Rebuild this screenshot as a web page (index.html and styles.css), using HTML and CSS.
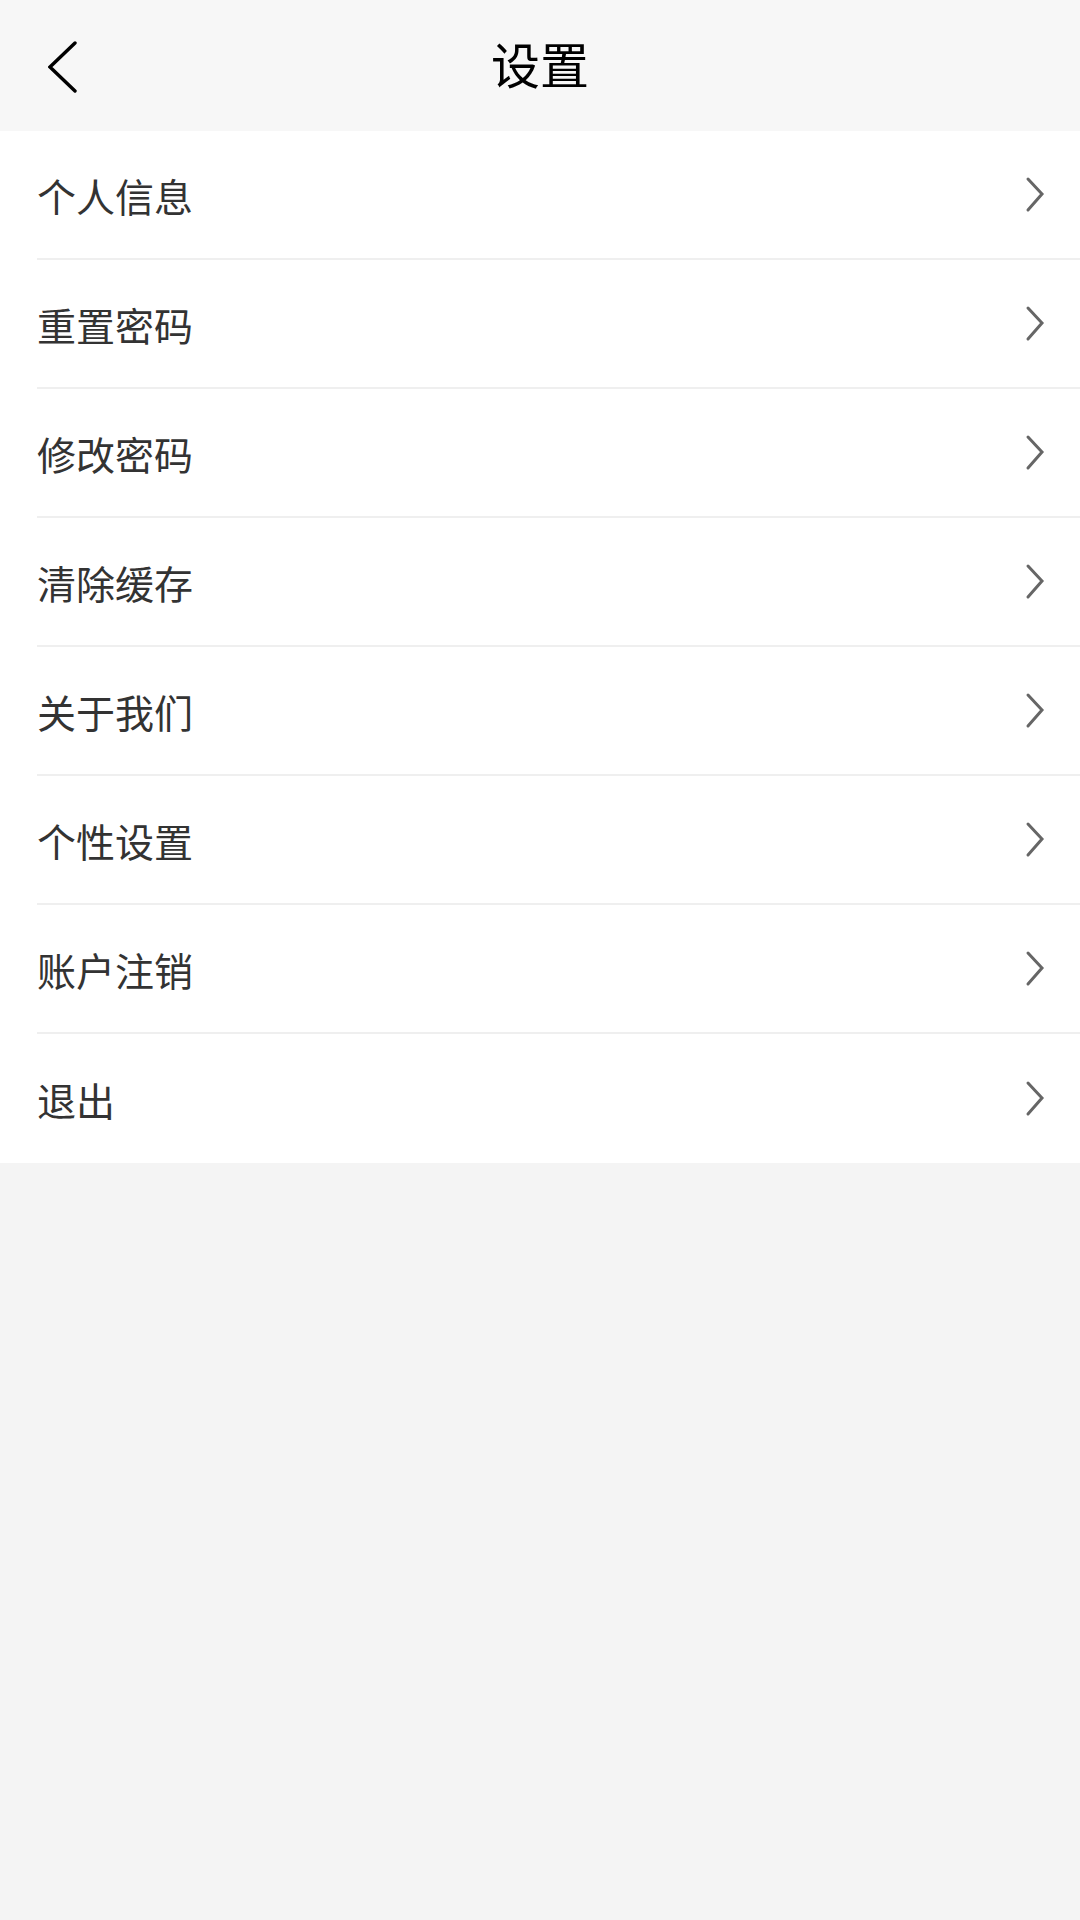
FILE: index.html
```html
<!DOCTYPE html>
<html lang="zh-CN">
<head>
<meta charset="utf-8">
<title>设置</title>
<link rel="stylesheet" href="styles.css">
</head>
<body>
<div class="page">
  <header class="topbar">
    <span class="back">
      <svg width="40" height="60" viewBox="0 0 40 60"><polyline points="27,6 2,30 27,54" fill="none" stroke="#000" stroke-width="3.4" stroke-linecap="round" stroke-linejoin="miter"/></svg>
    </span>
    <h1 class="title">设置</h1>
  </header>
  <ul class="menu">
    <li class="item"><span class="label">个人信息</span><svg class="chev" width="24" height="40" viewBox="0 0 24 40"><polyline points="7,5 21,20 7,36" fill="none" stroke="#666" stroke-width="3" stroke-linecap="round"/></svg></li>
    <li class="item"><span class="label">重置密码</span><svg class="chev" width="24" height="40" viewBox="0 0 24 40"><polyline points="7,5 21,20 7,36" fill="none" stroke="#666" stroke-width="3" stroke-linecap="round"/></svg></li>
    <li class="item"><span class="label">修改密码</span><svg class="chev" width="24" height="40" viewBox="0 0 24 40"><polyline points="7,5 21,20 7,36" fill="none" stroke="#666" stroke-width="3" stroke-linecap="round"/></svg></li>
    <li class="item"><span class="label">清除缓存</span><svg class="chev" width="24" height="40" viewBox="0 0 24 40"><polyline points="7,5 21,20 7,36" fill="none" stroke="#666" stroke-width="3" stroke-linecap="round"/></svg></li>
    <li class="item"><span class="label">关于我们</span><svg class="chev" width="24" height="40" viewBox="0 0 24 40"><polyline points="7,5 21,20 7,36" fill="none" stroke="#666" stroke-width="3" stroke-linecap="round"/></svg></li>
    <li class="item"><span class="label">个性设置</span><svg class="chev" width="24" height="40" viewBox="0 0 24 40"><polyline points="7,5 21,20 7,36" fill="none" stroke="#666" stroke-width="3" stroke-linecap="round"/></svg></li>
    <li class="item"><span class="label">账户注销</span><svg class="chev" width="24" height="40" viewBox="0 0 24 40"><polyline points="7,5 21,20 7,36" fill="none" stroke="#666" stroke-width="3" stroke-linecap="round"/></svg></li>
    <li class="item last"><span class="label">退出</span><svg class="chev" width="24" height="40" viewBox="0 0 24 40"><polyline points="7,5 21,20 7,36" fill="none" stroke="#666" stroke-width="3" stroke-linecap="round"/></svg></li>
  </ul>
</div>
</body>
</html>
```
FILE: styles.css
```css
html, body {
  margin: 0;
  padding: 0;
  background: #f4f4f4;
}
body {
  font-family: "Noto Sans CJK SC", "Noto Sans", sans-serif;
}
.page {
  width: 1080px;
  min-height: 1920px;
  background: #f4f4f4;
}
.topbar {
  height: 131px;
  background: #f7f7f7;
  display: flex;
  align-items: center;
  justify-content: center;
  position: relative;
}
.back {
  position: absolute;
  left: 48px;
  top: 37px;
  display: block;
  width: 40px;
  height: 60px;
}
.back svg { display: block; }
.title {
  margin: -6px 0 0 0;
  font-size: 49px;
  font-weight: 400;
  color: #000;
  line-height: 1;
}
.menu {
  list-style: none;
  margin: 0;
  padding: 0;
  background: #fff;
}
.item {
  height: 129px;
  box-sizing: border-box;
  display: flex;
  align-items: center;
  justify-content: space-between;
  margin-left: 37px;
  padding-right: 35px;
  border-bottom: 2px solid #efefef;
}
.item.last {
  border-bottom: none;
}
.label {
  font-size: 39px;
  color: #333;
  line-height: 1;
  padding-top: 1px;
}
.chev {
  display: block;
  margin-top: -2px;
}
```
